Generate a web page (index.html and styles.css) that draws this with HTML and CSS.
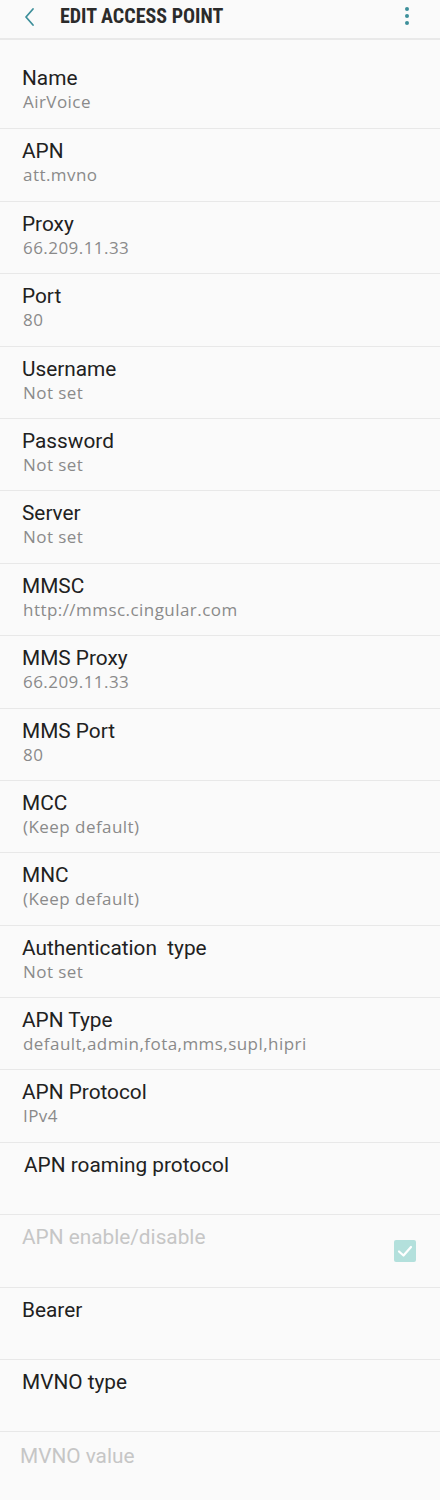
FILE: index.html
```html
<!DOCTYPE html>
<html>
<head>
<meta charset="utf-8">
<link rel="stylesheet" href="styles.css">
</head>
<body>
<header class="appbar">
  <svg class="back" width="16" height="22" viewBox="0 0 16 22"><path d="M11 3 L4 11 L11 19" fill="none" stroke="#3d8f9a" stroke-width="1.8" stroke-linecap="round" stroke-linejoin="round"/></svg>
  <h1 class="title">EDIT ACCESS POINT</h1>
  <svg class="more" width="6" height="22" viewBox="0 0 6 22"><circle cx="3" cy="4" r="2" fill="#3d8f9a"/><circle cx="3" cy="11" r="2" fill="#3d8f9a"/><circle cx="3" cy="18" r="2" fill="#3d8f9a"/></svg>
</header>
<main class="list">
  <div class="row"><div class="label">Name</div><div class="value">AirVoice</div></div>
  <div class="row"><div class="label">APN</div><div class="value">att.mvno</div></div>
  <div class="row"><div class="label">Proxy</div><div class="value">66.209.11.33</div></div>
  <div class="row"><div class="label">Port</div><div class="value">80</div></div>
  <div class="row"><div class="label">Username</div><div class="value">Not set</div></div>
  <div class="row"><div class="label">Password</div><div class="value">Not set</div></div>
  <div class="row"><div class="label">Server</div><div class="value">Not set</div></div>
  <div class="row"><div class="label">MMSC</div><div class="value">http://mmsc.cingular.com</div></div>
  <div class="row"><div class="label">MMS Proxy</div><div class="value">66.209.11.33</div></div>
  <div class="row"><div class="label">MMS Port</div><div class="value">80</div></div>
  <div class="row"><div class="label">MCC</div><div class="value">(Keep default)</div></div>
  <div class="row"><div class="label">MNC</div><div class="value">(Keep default)</div></div>
  <div class="row"><div class="label">Authentication&nbsp; type</div><div class="value">Not set</div></div>
  <div class="row"><div class="label">APN Type</div><div class="value">default,admin,fota,mms,supl,hipri</div></div>
  <div class="row"><div class="label">APN Protocol</div><div class="value">IPv4</div></div>
  <div class="row"><div class="label indent">APN roaming protocol</div></div>
  <div class="row check-row">
    <div class="label disabled">APN enable/disable</div>
    <span class="checkbox"><svg width="22" height="22" viewBox="0 0 22 22"><path d="M5 11.5 L9.5 15.5 L17 7" fill="none" stroke="#ffffff" stroke-width="2.2" stroke-linecap="round" stroke-linejoin="round"/></svg></span>
  </div>
  <div class="row"><div class="label">Bearer</div></div>
  <div class="row"><div class="label">MVNO type</div></div>
  <div class="row"><div class="label disabled outdent">MVNO value</div></div>
</main>
</body>
</html>
```
FILE: styles.css
```css
html, body {
  margin: 0;
  padding: 0;
  background: #fafafa;
  font-family: Roboto, "Noto Sans", "Liberation Sans", sans-serif;
}

.appbar {
  height: 38px;
  display: flex;
  align-items: center;
  padding: 0 30px 0 22px;
  border-bottom: 2px solid #e9e9e9;
  background: #fafafa;
}

.back {
  display: block;
  margin-top: -4px;
}

.title {
  margin: -6px 0 0 22px;
  flex: 1;
  font-family: "Liberation Sans Narrow", "Roboto Condensed", "DejaVu Sans Condensed", Roboto, sans-serif;
  font-weight: 700;
  font-size: 20px;
  color: #2b2b2b;
  letter-spacing: 0;
}

.more {
  display: block;
  margin-top: -6px;
}

.list {
  padding-top: 16px;
}

.row {
  height: 72.4px;
  box-sizing: border-box;
  padding: 9px 22px 0 22px;
  border-top: 1px solid #e8e8e8;
}

.row:first-child {
  border-top: none;
}

.label {
  font-size: 20.8px;
  line-height: 26px;
  color: #212121;
}

.value {
  font-family: "Open Sans", Roboto, sans-serif;
  font-size: 17px;
  line-height: 21px;
  letter-spacing: 0.45px;
  color: #8a8a8a;
  padding-left: 1px;
}

.label.indent {
  padding-left: 2px;
}

.label.outdent {
  margin-left: -2px;
  padding-top: 2px;
}

.disabled {
  color: #c6c6c6;
}

.check-row {
  display: flex;
  justify-content: space-between;
  align-items: flex-start;
  padding-right: 24px;
}

.checkbox {
  margin-top: 16px;
  width: 22px;
  height: 22px;
  border-radius: 2px;
  background: #b3e0dc;
  display: block;
}

.checkbox svg {
  display: block;
}
```
